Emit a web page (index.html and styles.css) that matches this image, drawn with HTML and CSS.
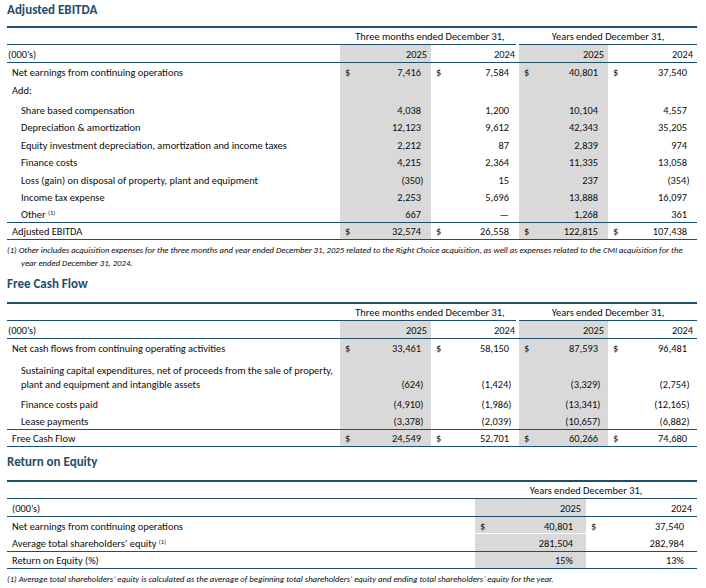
FILE: index.html
```html
<!DOCTYPE html>
<html lang="en">
<head>
<meta charset="utf-8">
<title>Non-GAAP measures</title>
<link rel="stylesheet" href="styles.css">
</head>
<body>
<div class="page">

<section class="sec sec-first">
  <h2 class="title">Adjusted EBITDA</h2>
  <table class="fin fin-4">
    <colgroup><col class="c-label"><col class="c-a"><col class="c-b"><col class="c-c"><col class="c-d"></colgroup>
    <tr class="r-head">
      <th class="lab"></th>
      <th colspan="2" class="grp"><div class="grp-in gap">Three months ended December 31,</div></th>
      <th colspan="2" class="grp"><div class="grp-in">Years ended December 31,</div></th>
    </tr>
    <tr class="line">
      <td class="lab units">(000’s)</td>
      <td class="yr g">2025</td><td class="yr">2024</td><td class="yr g">2025</td><td class="yr">2024</td>
    </tr>
    <tr>
      <td class="lab">Net earnings from continuing operations</td>
      <td class="num g"><span class="cur">$</span>7,416</td>
      <td class="num"><span class="cur">$</span>7,584</td>
      <td class="num g"><span class="cur">$</span>40,801</td>
      <td class="num"><span class="cur">$</span>37,540</td>
    </tr>
    <tr>
      <td class="lab">Add:</td>
      <td class="num g"></td><td class="num"></td><td class="num g"></td><td class="num"></td>
    </tr>
    <tr class="first">
      <td class="lab sub">Share based compensation</td>
      <td class="num g">4,038</td><td class="num">1,200</td><td class="num g">10,104</td><td class="num">4,557</td>
    </tr>
    <tr>
      <td class="lab sub">Depreciation &amp; amortization</td>
      <td class="num g">12,123</td><td class="num">9,612</td><td class="num g">42,343</td><td class="num">35,205</td>
    </tr>
    <tr>
      <td class="lab sub">Equity investment depreciation, amortization and income taxes</td>
      <td class="num g">2,212</td><td class="num">87</td><td class="num g">2,839</td><td class="num">974</td>
    </tr>
    <tr>
      <td class="lab sub">Finance costs</td>
      <td class="num g">4,215</td><td class="num">2,364</td><td class="num g">11,335</td><td class="num">13,058</td>
    </tr>
    <tr>
      <td class="lab sub">Loss (gain) on disposal of property, plant and equipment</td>
      <td class="num g">(350<span class="neg">)</span></td><td class="num">15</td><td class="num g">237</td><td class="num">(354<span class="neg">)</span></td>
    </tr>
    <tr>
      <td class="lab sub">Income tax expense</td>
      <td class="num g">2,253</td><td class="num">5,696</td><td class="num g">13,888</td><td class="num">16,097</td>
    </tr>
    <tr class="line">
      <td class="lab sub">Other <sup class="fn">(1)</sup></td>
      <td class="num g">667</td><td class="num">—</td><td class="num g">1,268</td><td class="num">361</td>
    </tr>
    <tr class="line">
      <td class="lab">Adjusted EBITDA</td>
      <td class="num g"><span class="cur">$</span>32,574</td>
      <td class="num"><span class="cur">$</span>26,558</td>
      <td class="num g"><span class="cur">$</span>122,815</td>
      <td class="num"><span class="cur">$</span>107,438</td>
    </tr>
  </table>
  <p class="note">(1) Other includes acquisition expenses for the three months and year ended December 31, 2025 related to the Right Choice acquisition, as well as expenses related to the CMI acquisition for the year ended December 31, 2024.</p>
</section>

<section class="sec">
  <h2 class="title">Free Cash Flow</h2>
  <table class="fin fin-4">
    <colgroup><col class="c-label"><col class="c-a"><col class="c-b"><col class="c-c"><col class="c-d"></colgroup>
    <tr class="r-head">
      <th class="lab"></th>
      <th colspan="2" class="grp"><div class="grp-in gap">Three months ended December 31,</div></th>
      <th colspan="2" class="grp"><div class="grp-in">Years ended December 31,</div></th>
    </tr>
    <tr class="line">
      <td class="lab units">(000’s)</td>
      <td class="yr g">2025</td><td class="yr">2024</td><td class="yr g">2025</td><td class="yr">2024</td>
    </tr>
    <tr>
      <td class="lab">Net cash flows from continuing operating activities</td>
      <td class="num g"><span class="cur">$</span>33,461</td>
      <td class="num"><span class="cur">$</span>58,150</td>
      <td class="num g"><span class="cur">$</span>87,593</td>
      <td class="num"><span class="cur">$</span>96,481</td>
    </tr>
    <tr class="tall">
      <td class="lab sub wrap">Sustaining capital expenditures, net of proceeds from the sale of property,<br>plant and equipment and intangible assets</td>
      <td class="num g">(624<span class="neg">)</span></td><td class="num">(1,424<span class="neg">)</span></td><td class="num g">(3,329<span class="neg">)</span></td><td class="num">(2,754<span class="neg">)</span></td>
    </tr>
    <tr class="first">
      <td class="lab sub">Finance costs paid</td>
      <td class="num g">(4,910<span class="neg">)</span></td><td class="num">(1,986<span class="neg">)</span></td><td class="num g">(13,341<span class="neg">)</span></td><td class="num">(12,165<span class="neg">)</span></td>
    </tr>
    <tr class="line">
      <td class="lab sub">Lease payments</td>
      <td class="num g">(3,378<span class="neg">)</span></td><td class="num">(2,039<span class="neg">)</span></td><td class="num g">(10,657<span class="neg">)</span></td><td class="num">(6,882<span class="neg">)</span></td>
    </tr>
    <tr class="line">
      <td class="lab">Free Cash Flow</td>
      <td class="num g"><span class="cur">$</span>24,549</td>
      <td class="num"><span class="cur">$</span>52,701</td>
      <td class="num g"><span class="cur">$</span>60,266</td>
      <td class="num"><span class="cur">$</span>74,680</td>
    </tr>
  </table>
</section>

<section class="sec">
  <h2 class="title">Return on Equity</h2>
  <table class="fin fin-2">
    <colgroup><col class="c-label2"><col class="c-e"><col class="c-f"></colgroup>
    <tr class="r-head">
      <th class="lab"></th>
      <th colspan="2" class="grp"><div class="grp-in">Years ended December 31,</div></th>
    </tr>
    <tr class="line">
      <td class="lab">(000’s)</td>
      <td class="yr g">2025</td><td class="yr">2024</td>
    </tr>
    <tr>
      <td class="lab">Net earnings from continuing operations</td>
      <td class="num g split"><span class="cur">$</span>40,801</td>
      <td class="num"><span class="cur">$</span>37,540</td>
    </tr>
    <tr class="line">
      <td class="lab">Average total shareholders’ equity <sup class="fn">(1)</sup></td>
      <td class="num g">281,504</td><td class="num">282,984</td>
    </tr>
    <tr class="line">
      <td class="lab">Return on Equity (%)</td>
      <td class="num g">15%</td><td class="num">13%</td>
    </tr>
  </table>
  <p class="note">(1) Average total shareholders’ equity is calculated as the average of beginning total shareholders’ equity and ending total shareholders’ equity for the year.</p>
</section>

</div>
</body>
</html>
```

FILE: styles.css
```css
* { box-sizing: border-box; }

body {
  margin: 0;
  background: #ffffff;
  color: #0d0d0d;
  font-family: Carlito, Calibri, Lato, "Liberation Sans", sans-serif;
  font-size: 10.4px;
}

.page {
  width: 706px;
  padding: 2px 9px 0 7px;
}

.sec { margin-top: 7px; }
.sec-first { margin-top: 0; }

.title {
  margin: 0 0 10px 0;
  font-size: 13px;
  line-height: 16px;
  font-weight: 700;
  color: #1f4e6b;
}

.sec-first .title { margin-bottom: 8px; }

.fin {
  width: 690px;
  table-layout: fixed;
  border-collapse: separate;
  border-spacing: 0;
  border-top: 2px solid #1f4e6b;
}

.c-label { width: 333px; }
.c-a { width: 91px; }
.c-b { width: 88px; }
.c-c { width: 89px; }
.c-d { width: 89px; }
.c-label2 { width: 468px; }
.c-e { width: 111px; }
.c-f { width: 111px; }

.fin td {
  padding: 3.5px 0 0 0;
  line-height: 14px;
  vertical-align: bottom;
  white-space: nowrap;
}

.fin tr.line > td {
  padding-top: 2.5px;
  border-bottom: 1px solid #1f4e6b;
}

.fin tr.first > td { padding-top: 6px; }
.fin tr.tall > td { padding-top: 8px; }

.r-head th {
  padding: 0;
  font-weight: 400;
  vertical-align: bottom;
}

.r-head th.lab { border-bottom: 1px solid #1f4e6b; }

.grp { text-align: center; }

.grp-in {
  padding-top: 2px;
  line-height: 14px;
  border-bottom: 1px solid #1f4e6b;
}

.grp-in.gap { margin-right: 3px; padding-left: 4px; }

.lab { text-align: left; padding-left: 5px !important; }
.lab.units { padding-left: 1px !important; }
.lab.sub { padding-left: 14px !important; }

.yr { text-align: right; padding-right: 4px !important; }

.num {
  text-align: right;
  padding-right: 10px !important;
  padding-left: 5px !important;
}

.fin-2 .num { padding-right: 13px !important; }
.fin-2 .yr { padding-right: 5px !important; }

.cur { float: left; }

.neg { margin-right: -2.5px; }

.g { background: #d9d9d9; }

.split { box-shadow: inset 0 -1px 0 #ffffff; }

.fn {
  font-size: 6.5px;
  line-height: 0;
  vertical-align: 3px;
}

.note {
  margin: 4px 0 0 0;
  padding-left: 14px;
  text-indent: -14px;
  font-size: 8.7px;
  line-height: 12.5px;
  font-style: italic;
}
```
